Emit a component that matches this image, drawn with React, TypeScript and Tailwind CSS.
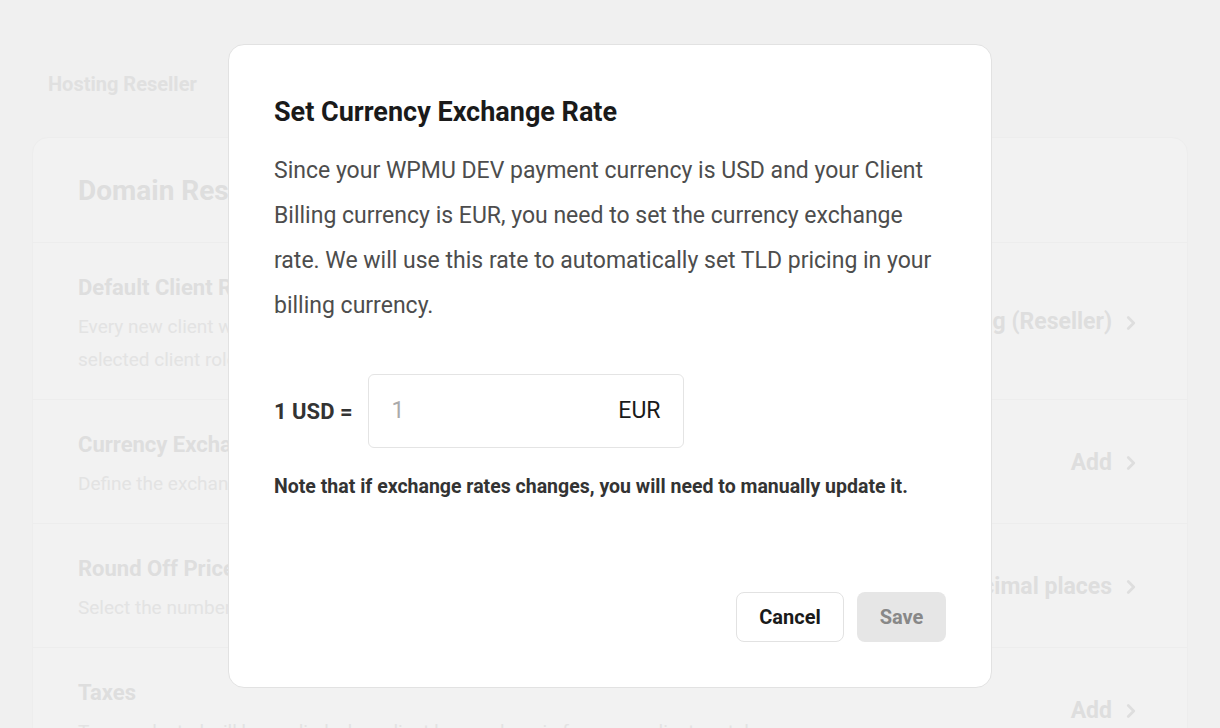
import { ChevronRight } from "lucide-react";

const rows = [
  {
    title: "Default Client Role",
    desc: ["Every new client who signs up will be automatically assigned the", "selected client role."],
    value: "Hosting (Reseller)",
  },
  {
    title: "Currency Exchange Rate",
    desc: ["Define the exchange rate between your currencies."],
    value: "Add",
  },
  {
    title: "Round Off Price",
    desc: ["Select the number of decimal places for prices."],
    value: "2 decimal places",
  },
  {
    title: "Taxes",
    desc: ["Taxes selected will be applied when client buys a domain from your client portal."],
    value: "Add",
  },
];

function SettingRow({ title, desc, value }: { title: string; desc: string[]; value: string }) {
  return (
    <div className="flex items-center justify-between border-t border-[#ededed] px-[45px] pt-[30px] pb-[23px]">
      <div className="w-[780px]">
        <h3 className="text-[22px] leading-[30px] font-bold text-[#dedede]">{title}</h3>
        <p className="mt-[7px] text-[19px] leading-[33px] text-[#e3e3e3]">
          {desc.map((line) => (
            <span key={line} className="block">
              {line}
            </span>
          ))}
        </p>
      </div>
      <div className="mb-[4px] flex items-center gap-[8px] text-[#dedede]">
        <span className="text-[23px] font-bold">{value}</span>
        <ChevronRight className="h-[22px] w-[22px]" strokeWidth={3} />
      </div>
    </div>
  );
}

export default function App() {
  return (
    <div
      className="relative h-screen w-full overflow-hidden bg-[#f0f0f0]"
      style={{ fontFamily: "Roboto, 'Liberation Sans', sans-serif" }}
    >
      {/* page behind the overlay */}
      <div className="pt-[72px]">
        <p className="px-[48px] text-[20px] leading-[24px] font-bold text-[#e0e0e0]">Hosting Reseller</p>
        <div className="mx-[32px] mt-[41px] rounded-[16px] border border-[#ededed] bg-[#f2f2f2]">
          <div className="flex h-[104px] items-center px-[45px] pt-[2px]">
            <h2 className="text-[28px] font-bold text-[#dedede]">Domain Reseller</h2>
          </div>
          {rows.map((r) => (
            <SettingRow key={r.title} {...r} />
          ))}
        </div>
      </div>

      {/* modal */}
      <div className="absolute inset-0 flex justify-center pt-[44px]">
        <div className="flex h-[644px] w-[764px] flex-col rounded-[16px] border border-[#e2e2e2] bg-white px-[45px] pt-[48px] pb-[45px]">
          <h1 className="text-[27px] leading-[38px] font-bold text-[#1a1a1a]">Set Currency Exchange Rate</h1>
          <p className="mt-[17px] text-[23px] leading-[45px] text-[#4d4d4d]">
            Since your WPMU DEV payment currency is USD and your Client Billing currency is EUR, you need to set the
            currency exchange rate. We will use this rate to automatically set TLD pricing in your billing currency.
          </p>
          <div className="mt-[46px] flex items-center gap-[15px]">
            <span className="text-[22px] font-bold text-[#333333]">1 USD =</span>
            <div className="flex h-[74px] w-[316px] items-center justify-between rounded-[6px] border border-[#e4e4e4] pr-[22px] pl-[23px]">
              <span className="text-[23px] text-[#aaaaaa]">1</span>
              <span className="text-[23px] text-[#1a1a1a]">EUR</span>
            </div>
          </div>
          <p className="mt-[27px] text-[19.5px] leading-[24px] font-bold text-[#333333]">
            Note that if exchange rates changes, you will need to manually update it.
          </p>
          <div className="mt-auto flex justify-end gap-[13px]">
            <button className="h-[50px] w-[108px] rounded-[8px] border border-[#e2e2e2] bg-white text-[20px] font-bold text-[#1a1a1a]">
              Cancel
            </button>
            <button className="h-[50px] w-[89px] rounded-[8px] bg-[#e6e6e6] text-[20px] font-bold text-[#888888]">
              Save
            </button>
          </div>
        </div>
      </div>
    </div>
  );
}
